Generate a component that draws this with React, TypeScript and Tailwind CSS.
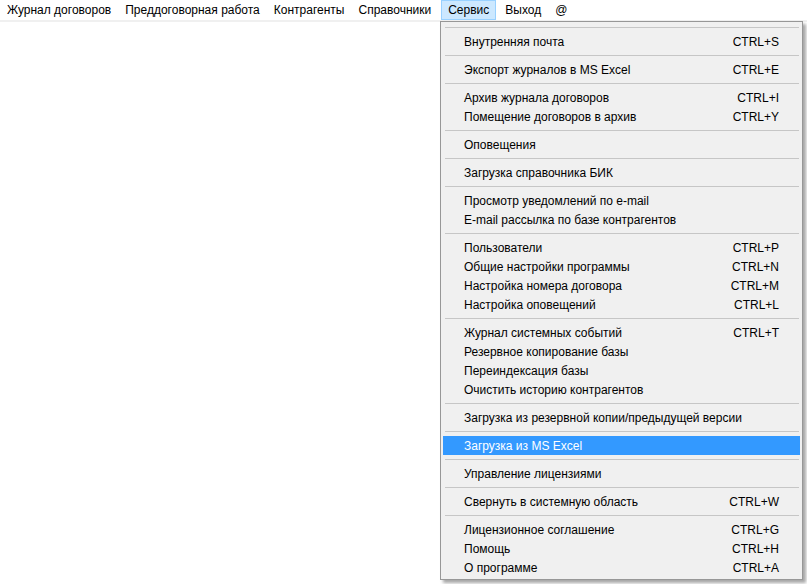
import React from 'react'

type Entry = { label: string; keys?: string; active?: boolean } | 'sep'

const topMenu = [
  'Журнал договоров',
  'Преддоговорная работа',
  'Контрагенты',
  'Справочники',
  'Сервис',
  'Выход',
  '@',
]

const serviceMenu: Entry[] = [
  'sep',
  { label: 'Внутренняя почта', keys: 'CTRL+S' },
  'sep',
  { label: 'Экспорт журналов в MS Excel', keys: 'CTRL+E' },
  'sep',
  { label: 'Архив журнала договоров', keys: 'CTRL+I' },
  { label: 'Помещение договоров в архив', keys: 'CTRL+Y' },
  'sep',
  { label: 'Оповещения' },
  'sep',
  { label: 'Загрузка справочника БИК' },
  'sep',
  { label: 'Просмотр уведомлений по e-mail' },
  { label: 'E-mail рассылка по базе контрагентов' },
  'sep',
  { label: 'Пользователи', keys: 'CTRL+P' },
  { label: 'Общие настройки программы', keys: 'CTRL+N' },
  { label: 'Настройка номера договора', keys: 'CTRL+M' },
  { label: 'Настройка оповещений', keys: 'CTRL+L' },
  'sep',
  { label: 'Журнал системных событий', keys: 'CTRL+T' },
  { label: 'Резервное копирование базы' },
  { label: 'Переиндексация базы' },
  { label: 'Очистить историю контрагентов' },
  'sep',
  { label: 'Загрузка из резервной копии/предыдущей версии' },
  'sep',
  { label: 'Загрузка из MS Excel', active: true },
  'sep',
  { label: 'Управление лицензиями' },
  'sep',
  { label: 'Свернуть в системную область', keys: 'CTRL+W' },
  'sep',
  { label: 'Лицензионное соглашение', keys: 'CTRL+G' },
  { label: 'Помощь', keys: 'CTRL+H' },
  { label: 'О программе', keys: 'CTRL+A' },
]

function MenuRow({ entry }: { entry: Entry }) {
  if (entry === 'sep') {
    return (
      <div className="h-[9px] flex items-center pl-[2px] pr-[1px]">
        <div className="h-px w-full bg-[#c6c6c6]" />
      </div>
    )
  }
  return (
    <div
      className={
        entry.active
          ? 'h-[19px] flex items-center justify-between pl-[21px] pr-[21px] bg-[#3399ff] text-white'
          : 'h-[19px] flex items-center justify-between pl-[21px] pr-[21px] text-black'
      }
    >
      <span>{entry.label}</span>
      {entry.keys && <span>{entry.keys}</span>}
    </div>
  )
}

export default function App() {
  return (
    <div className="relative w-[807px] h-[584px] bg-white overflow-hidden font-['Segoe_UI','Liberation_Sans',sans-serif] text-[12px] leading-none">
      {/* menu bar */}
      <div className="h-[20px] flex items-stretch">
        {topMenu.map((item) => (
          <div
            key={item}
            className={
              item === 'Сервис'
                ? 'flex items-center ml-[3px] mr-[2px] px-[6px] bg-[#cce8ff] border border-[#99d1ff]'
                : 'flex items-center px-[7px]'
            }
          >
            {item}
          </div>
        ))}
      </div>
      <div className="h-[2px] bg-[#f0f0f0]" />

      {/* dropdown */}
      <div className="absolute left-[440px] top-[21px] w-[363px] bg-[#f0f0f0] border border-[#979797] px-[2px] pt-[1px] pb-[2px] shadow-[3px_3px_3px_rgba(0,0,0,0.35)]">
        {serviceMenu.map((e, i) => (
          <MenuRow key={i} entry={e} />
        ))}
      </div>
    </div>
  )
}
